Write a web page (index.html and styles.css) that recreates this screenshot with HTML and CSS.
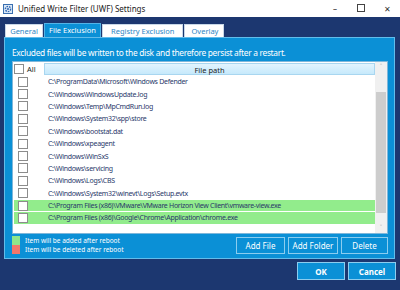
FILE: index.html
```html
<!DOCTYPE html>
<html lang="en">
<head>
  <meta charset="UTF-8" />
  <title>Unified Write Filter (UWF) Settings</title>
  <link rel="stylesheet" href="styles.css">
</head>
<body>

  <div class="titlebar">
    <svg class="app-icon" width="10" height="10" viewBox="0 0 10 10">
      <rect x="0.5" y="0.5" width="9" height="9" fill="#dbe8f5" stroke="#3a6fb0"/>
      <circle cx="5" cy="5" r="2.6" fill="none" stroke="#2f66b3" stroke-width="1.4" stroke-dasharray="1.6 1"/>
      <circle cx="5" cy="5" r="1" fill="#2f66b3"/>
    </svg>
    <span class="title">Unified Write Filter (UWF) Settings</span>
    <div class="controls">
      <span class="ctl">&#8211;</span>
      <span class="ctl"><span class="max"></span></span>
      <span class="ctl">&#10005;</span>
    </div>
  </div>

  <div class="tabs">
    <div class="tab">General</div>
    <div class="tab active">File Exclusion</div>
    <div class="tab">Registry Exclusion</div>
    <div class="tab overlay">Overlay</div>
  </div>

  <div class="panel">
    <p class="info">Excluded files will be written to the disk and therefore persist after a restart.</p>

    <div class="list">
      <div class="rows">
        <div class="head">
          <div class="all"><span class="box"></span>All</div>
          <div class="col">File path</div>
        </div>
        <div class="row"><span class="box"></span>C:\ProgramData\Microsoft\Windows Defender</div>
        <div class="row"><span class="box"></span>C:\Windows\WindowsUpdate.log</div>
        <div class="row"><span class="box"></span>C:\Windows\Temp\MpCmdRun.log</div>
        <div class="row"><span class="box"></span>C:\Windows\System32\spp\store</div>
        <div class="row"><span class="box"></span>C:\Windows\bootstat.dat</div>
        <div class="row"><span class="box"></span>C:\Windows\xpeagent</div>
        <div class="row"><span class="box"></span>C:\Windows\WinSxS</div>
        <div class="row"><span class="box"></span>C:\Windows\servicing</div>
        <div class="row"><span class="box"></span>C:\Windows\Logs\CBS</div>
        <div class="row"><span class="box"></span>C:\Windows\System32\winevt\Logs\Setup.evtx</div>
        <div class="row added"><span class="box"></span>C:\Program Files (x86)\VMware\VMware Horizon View Client\vmware-view.exe</div>
        <div class="row added"><span class="box"></span>C:\Program Files (x86)\Google\Chrome\Application\chrome.exe</div>
      </div>
      <div class="scrollbar">
        <span class="arrow">&#708;</span>
        <div class="track"><div class="thumb"></div></div>
        <span class="arrow">&#709;</span>
      </div>
    </div>

    <div class="footer">
      <div class="legend">
        <div class="key"><span class="swatch green"></span>Item will be added after reboot</div>
        <div class="key"><span class="swatch red"></span>Item will be deleted after reboot</div>
      </div>
      <div class="buttons">
        <button class="btn add-file">Add File</button>
        <button class="btn add-folder">Add Folder</button>
        <button class="btn delete">Delete</button>
      </div>
    </div>
  </div>

  <div class="actions">
    <button class="btn big">OK</button>
    <button class="btn big">Cancel</button>
  </div>

</body>
</html>
```

FILE: styles.css
```css
body {
  margin: 0;
  width: 400px;
  height: 290px;
  background-color: #1c3770;
  font-family: "Noto Sans", "Open Sans", sans-serif;
  overflow: hidden;
}
.titlebar {
  height: 17px;
  background-color: #fff;
  display: flex;
  align-items: center;
  padding-left: 3px;
}
.app-icon {
  margin-right: 5px;
}
.title {
  font-size: 8px;
  color: #222;
}
.controls {
  margin-left: auto;
  display: flex;
}
.ctl {
  width: 26px;
  text-align: center;
  font-size: 8px;
  color: #333;
}
.max {
  display: inline-block;
  width: 6px;
  height: 6px;
  border: 1px solid #444;
}
.tabs {
  display: flex;
  margin-top: 7px;
  padding-left: 5px;
  height: 13px;
  align-items: flex-end;
}
.tab {
  height: 13px;
  line-height: 13px;
  background-color: #fff;
  color: #2d86c4;
  font-size: 7.5px;
  padding: 0 8px;
  margin-right: 1px;
  border: 1px solid #c8d8e8;
  border-bottom: none;
  box-sizing: border-box;
}
.tab:first-child {
  width: 38px;
  text-align: center;
  padding: 0;
}
.tab.overlay {
  width: 40px;
  padding: 0 0 0 6px;
}
.tab.active {
  background-color: #0b90d6;
  color: #fff;
  height: 14px;
  width: 57px;
  padding: 0;
  text-align: center;
  border-color: #53b3e6;
}
.panel {
  margin: 0 5px 0 4px;
  height: 222px;
  background-color: #0b90d6;
  border: 1px solid #62bcea;
  box-sizing: border-box;
  padding: 0 6px 0 7px;
  display: flex;
  flex-direction: column;
}
.info {
  margin: 9px 0 2px 0;
  color: #fff;
  font-size: 8.4px;
  line-height: 12px;
  letter-spacing: -0.3px;
  white-space: nowrap;
}
.list {
  height: 171px;
  background-color: #fff;
  display: flex;
  border: 1px solid #7fb7da;
}
.rows {
  flex: 1;
  padding-top: 1px;
}
.head {
  display: flex;
  height: 12px;
  line-height: 12px;
  font-size: 7.5px;
  color: #222;
  margin-bottom: 1px;
}
.all {
  width: 30px;
  display: flex;
  align-items: center;
  padding-left: 1px;
}
.all .box {
  margin-right: 3px;
}
.col {
  flex: 1;
  text-align: center;
  background: linear-gradient(#e2f4fe, #c6e9fb);
  border: 1px solid #a8d6f0;
  box-sizing: border-box;
}
.box {
  width: 8px;
  height: 8px;
  border: 1px solid #8c8c8c;
  background-color: #fff;
  display: inline-block;
  flex-shrink: 0;
}
.row {
  height: 11.4px;
  margin-bottom: 1px;
  display: flex;
  align-items: center;
  font-size: 7px;
  letter-spacing: -0.3px;
  color: #29386a;
  white-space: nowrap;
  padding-left: 5px;
}
.row .box {
  margin-right: 20px;
}
.row.added {
  background-color: #92ec8c;
  margin-left: 1px;
  padding-left: 4px;
}
.scrollbar {
  width: 12px;
  background-color: #f0f0f0;
  display: flex;
  flex-direction: column;
  align-items: center;
}
.arrow {
  height: 10px;
  font-size: 7px;
  color: #999;
  line-height: 10px;
}
.track {
  flex: 1;
  width: 100%;
  padding-top: 20px;
  padding-bottom: 10px;
  box-sizing: border-box;
}
.thumb {
  height: 100%;
  margin: 0 1px;
  background-color: #cdcdcd;
}
.footer {
  display: flex;
  justify-content: space-between;
  margin-top: 2px;
}
.legend {
  font-size: 6.5px;
  color: #fff;
}
.key {
  display: flex;
  align-items: center;
  height: 9px;
}
.swatch {
  width: 8px;
  height: 9px;
  margin-right: 5px;
}
.green {
  background-color: #8ee68a;
}
.red {
  background-color: #f2776a;
}
.buttons {
  display: flex;
  gap: 3px;
  padding-top: 1px;
}
.btn {
  background-color: #0b90d6;
  border: 1px solid #8ccdef;
  color: #fff;
  font-family: "Noto Sans", "Open Sans", sans-serif;
  font-size: 8px;
  height: 17px;
  padding: 0;
}
.add-file {
  width: 49px;
}
.add-folder {
  width: 50px;
}
.delete {
  width: 47px;
}
.actions {
  display: flex;
  justify-content: flex-end;
  gap: 3px;
  padding-right: 4px;
  margin-top: 3px;
}
.btn.big {
  width: 48px;
  height: 18px;
  font-weight: bold;
}
```
